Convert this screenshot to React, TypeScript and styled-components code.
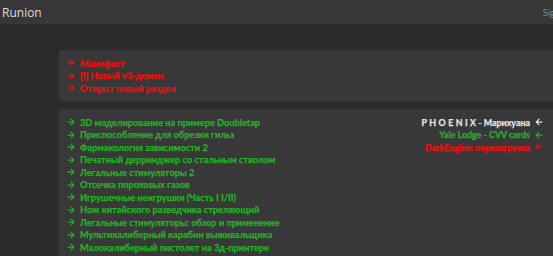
import styled, { createGlobalStyle } from "styled-components";
import { FaArrowRight, FaArrowLeft } from "react-icons/fa";

const GlobalStyle = createGlobalStyle`
  html, body {
    margin: 0;
    padding: 0;
    background: #2b2b2b;
    overflow: hidden;
    font-family: Lato, "Open Sans", sans-serif;
  }
`;

const redLinks = ["Манифест", "[!] Новый v3-домен", "Открыт новый раздел"];

const greenLinks = [
  "3D моделирование на примере Doubletap",
  "Приспособление для обрезки гильз",
  "Фармакология зависимости 2",
  "Печатный дерринджер со стальным стволом",
  "Легальные стимуляторы 2",
  "Отсечка пороховых газов",
  "Игрушечные неигрушки (Часть I I/II)",
  "Нож китайского разведчика стреляющий",
  "Легальные стимуляторы: обзор и применение",
  "Мультикалиберный карабин выживальщика",
  "Малокалиберный пистолет на 3д-принтере",
  "Самодельный глушитель",
];

const Header = styled.header`
  height: 24px;
  background: #373737;
  display: flex;
  align-items: center;
  justify-content: space-between;
  padding: 0 0 0 2px;
  white-space: nowrap;
`;

const Brand = styled.span`
  color: #dedede;
  font-size: 12px;
  font-family: "Open Sans", sans-serif;
`;

const SignIn = styled.span`
  color: #8a8a8a;
  font-size: 9px;
  margin-right: -16px;
`;

const Main = styled.main`
  padding: 26px 0 0 59px;
  display: flex;
  flex-direction: column;
  gap: 8px;
  width: 500px;
`;

const Panel = styled.section`
  background: #383838;
  border-radius: 3px;
  padding: 7px 8px 6px;
  display: flex;
  justify-content: space-between;
  min-height: 38px;
`;

const List = styled.ul`
  list-style: none;
  margin: 0;
  padding: 0;
`;

const Item = styled.li<{ $color: string; $right?: boolean }>`
  display: flex;
  align-items: center;
  justify-content: ${({ $right }) => ($right ? "flex-end" : "flex-start")};
  gap: 5px;
  height: 12.5px;
  color: ${({ $color }) => $color};
  font-size: ${({ $right }) => ($right ? "8.9px" : "9.2px")};
  font-weight: 700;
  -webkit-text-stroke: 0.25px currentColor;
  white-space: nowrap;

  svg {
    width: 8px;
    height: 8px;
    flex: none;
  }
`;

const Spaced = styled.span`
  letter-spacing: 2.4px;
`;

const Side = styled(List)`
  margin-right: 8px;
`;

export default function App() {
  return (
    <>
      <GlobalStyle />
      <Header>
        <Brand>Runion</Brand>
        <SignIn>Sign in</SignIn>
      </Header>
      <Main>
        <Panel>
          <List>
            {redLinks.map((t) => (
              <Item key={t} $color="#f20d0d">
                <FaArrowRight />
                {t}
              </Item>
            ))}
          </List>
        </Panel>
        <Panel>
          <List>
            {greenLinks.map((t) => (
              <Item key={t} $color="#22b422">
                <FaArrowRight />
                {t}
              </Item>
            ))}
          </List>
          <Side>
            <Item $color="#e4e4e4" $right>
              <span>
                <Spaced>PHOENIX</Spaced>- Марихуана
              </span>
              <FaArrowLeft />
            </Item>
            <Item $color="#22b422" $right>
              Yale Lodge - CVV cards
              <FaArrowLeft />
            </Item>
            <Item $color="#f20d0d" $right>
              DarkEngine: перезагрузка
              <FaArrowLeft />
            </Item>
          </Side>
        </Panel>
      </Main>
    </>
  );
}
